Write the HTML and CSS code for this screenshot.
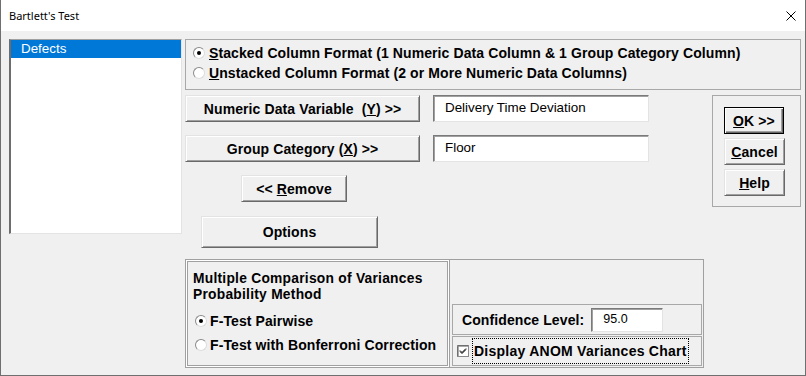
FILE: index.html
```html
<!DOCTYPE html>
<html>
<head>
<meta charset="utf-8">
<link rel="stylesheet" href="styles.css">
</head>
<body>
<div class="window">
  <div class="titlebar">
    <span class="title">Bartlett's Test</span>
    <svg class="close" viewBox="0 0 10 10"><path d="M0.5 0.5 L9.5 9.5 M9.5 0.5 L0.5 9.5" stroke="#000" stroke-width="1" fill="none"/></svg>
  </div>
  <div class="content">
    <div class="listbox">
      <div class="item selected">Defects</div>
    </div>
    <div class="main">
      <div class="group format">
        <div class="radio-row"><span class="radio on"></span><span class="label"><u>S</u>tacked Column Format (1 Numeric Data Column &amp; 1 Group Category Column)</span></div>
        <div class="radio-row"><span class="radio"></span><span class="label"><u>U</u>nstacked Column Format (2 or More Numeric Data Columns)</span></div>
      </div>
      <div class="middle">
        <div class="fields">
          <div class="field-row">
            <div class="btn wide">Numeric Data Variable&nbsp; (<u>Y</u>) &gt;&gt;</div>
            <div class="input">Delivery Time Deviation</div>
          </div>
          <div class="field-row second">
            <div class="btn wide">Group Category (<u>X</u>) &gt;&gt;</div>
            <div class="input">Floor</div>
          </div>
          <div class="btn remove">&lt;&lt; <u>R</u>emove</div>
          <div class="btn options">Options</div>
        </div>
        <div class="group actions">
          <div class="btn act default"><u>O</u>K &gt;&gt;</div>
          <div class="btn act"><u>C</u>ancel</div>
          <div class="btn act"><u>H</u>elp</div>
        </div>
      </div>
      <div class="bottom">
        <div class="group method">
          <div class="method-title">Multiple Comparison of Variances</div>
          <div class="method-title">Probability Method</div>
          <div class="method-options">
            <div class="radio-row tall"><span class="radio on"></span><span class="label">F-Test Pairwise</span></div>
            <div class="radio-row tall"><span class="radio"></span><span class="label">F-Test with Bonferroni Correction</span></div>
          </div>
        </div>
        <div class="panel">
          <div class="subbox conf">
            <span class="label">Confidence Level:</span>
            <div class="input small">95.0</div>
          </div>
          <div class="subbox chk">
            <svg class="checkbox" viewBox="0 0 12 12"><rect x="0.5" y="0.5" width="11" height="11" fill="#fff" stroke="#8a8a8a"/><path d="M1 1.5 V11 M1 1 H11" stroke="#555" fill="none"/><path d="M3 5.5 L5 7.5 L9 3.5 M3 6.5 L5 8.5 L9 4.5" stroke="#000" fill="none"/></svg>
            <span class="label focus">Display ANOM Variances Chart</span>
          </div>
        </div>
      </div>
    </div>
  </div>
</div>
</body>
</html>
```
FILE: styles.css
```css
* { box-sizing: border-box; }
html, body { margin: 0; padding: 0; }
body {
  width: 806px;
  height: 376px;
  overflow: hidden;
  background: #f0f0f0;
  font-family: "Liberation Sans", Arial, sans-serif;
  color: #000;
}
u { text-decoration: underline; text-underline-offset: 1px; text-decoration-thickness: 1px; }

.window {
  width: 806px;
  height: 376px;
  border: 1px solid #6f6f6f;
  border-top: none;
  background: #f0f0f0;
  display: flex;
  flex-direction: column;
}
.titlebar {
  height: 31px;
  flex: none;
  background: #fff;
  display: flex;
  align-items: center;
  justify-content: space-between;
  padding: 0 9px 0 8px;
}
.title { font-family: "Noto Sans", "Liberation Sans", sans-serif; font-size: 11px; }
.close { width: 10px; height: 10px; display: block; }

.content {
  display: flex;
  gap: 3px;
  padding: 8px 0 0 8px;
}
.listbox {
  width: 173px;
  height: 195px;
  flex: none;
  background: #fff;
  border-style: solid;
  border-width: 1px 1px 1px 2px;
  border-color: #a0a0a0 #e3e3e3 #e3e3e3 #6d6d6d;
  padding: 0;
}
.item {
  height: 18px;
  line-height: 18px;
  padding-left: 10px;
  font-size: 13.4px;
}
.item.selected { background: #0078d7; color: #fff; }

.main {
  width: 616px;
  display: flex;
  flex-direction: column;
}
.group {
  border: 1px solid #a8a8a8;
}
.format {
  height: 51px;
  padding: 3px 0 0 7px;
}
.radio-row {
  display: flex;
  align-items: center;
  height: 20px;
  font-size: 14px;
  font-weight: bold;
  letter-spacing: 0.1px;
}
.radio-row.tall { height: 24px; }
.radio {
  width: 12px;
  height: 12px;
  flex: none;
  border-radius: 50%;
  background: #fff;
  border: 1px solid;
  border-color: #8a8a8a #dcdcdc #dcdcdc #8a8a8a;
  position: relative;
  margin-right: 4px;
}
.radio.on::after {
  content: "";
  position: absolute;
  left: 3px;
  top: 3px;
  width: 4px;
  height: 4px;
  border-radius: 50%;
  background: #000;
}

.middle {
  display: flex;
  margin-top: 5px;
}
.fields {
  width: 464px;
  display: flex;
  flex-direction: column;
  align-items: flex-start;
}
.field-row {
  display: flex;
  gap: 13px;
  align-items: flex-start;
}
.field-row.second { margin-top: 13px; }

.btn {
  display: flex;
  align-items: center;
  justify-content: center;
  background: #f0f0f0;
  font-size: 14px;
  font-weight: bold;
  letter-spacing: 0.1px;
  border: 1px solid;
  border-color: #e3e3e3 #696969 #696969 #e3e3e3;
  box-shadow: inset 1px 1px 0 #fff, inset -1px -1px 0 #a0a0a0;
  white-space: pre;
}
.btn.wide { width: 235px; height: 27px; }
.btn.remove { width: 106px; height: 27px; margin: 13px 0 0 56px; }
.btn.options { width: 177px; height: 32px; margin: 14px 0 0 16px; }

.input {
  width: 216px;
  height: 27px;
  background: #fff;
  border: 1px solid;
  border-color: #7a7a7a #e3e3e3 #e3e3e3 #7a7a7a;
  box-shadow: inset 1px 1px 0 #a0a0a0;
  font-size: 13.4px;
  padding: 3px 0 0 11px;
  line-height: 17px;
}
.input.small {
  width: 72px;
  height: 24px;
  padding: 2px 0 0 11px;
  font-size: 12.5px;
  font-weight: normal;
  letter-spacing: 0;
}

.actions {
  width: 89px;
  height: 112px;
  margin-left: 63px;
  padding: 11px 0 0 11px;
  display: flex;
  flex-direction: column;
  gap: 4px;
}
.btn.act { width: 61px; height: 27px; }
.btn.default {
  border: 1px solid #000;
  box-shadow: inset 1px 1px 0 #fff, inset -1px -1px 0 #696969, inset -2px -2px 0 #a0a0a0;
  width: 60px;
}

.bottom {
  display: flex;
  margin-top: 11px;
}
.method {
  width: 265px;
  height: 109px;
  border: 1px solid #a0a0a0;
  box-shadow: inset 0 0 0 1px #fff, inset 0 0 0 2px #a0a0a0;
  padding: 11px 0 0 7px;
}
.method-title {
  font-size: 13.8px;
  font-weight: bold;
  letter-spacing: 0.25px;
  height: 16px;
  line-height: 16px;
}
.method-options {
  margin-top: 6px;
  padding-left: 2px;
}
.method-options .radio { margin-right: 3px; }

.panel {
  width: 254px;
  height: 109px;
  border: 1px solid #a0a0a0;
  border-left: none;
  padding: 0 1px 1px 2px;
  display: flex;
  flex-direction: column;
  justify-content: flex-end;
  gap: 1px;
}
.subbox {
  border: 1px solid #a8a8a8;
  display: flex;
  align-items: center;
  font-size: 14px;
  font-weight: bold;
  letter-spacing: 0.1px;
}
.subbox.conf {
  height: 31px;
  padding-left: 9px;
  gap: 7px;
}
.subbox.chk {
  height: 30px;
  padding-left: 4px;
}
.checkbox { width: 12px; height: 12px; display: block; flex: none; margin-right: 3px; }
.focus {
  border: 1px dotted #000;
  height: 26px;
  display: flex;
  align-items: center;
  padding: 0 1px;
  letter-spacing: 0.25px;
}
```
